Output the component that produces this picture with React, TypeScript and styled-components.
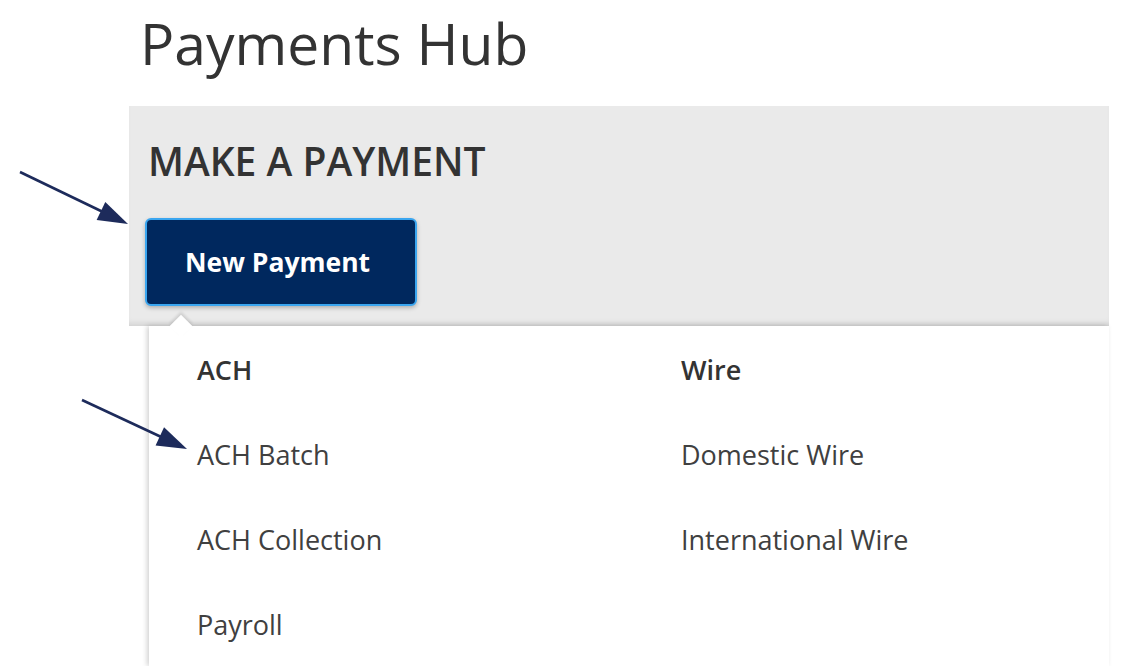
import React from "react";
import styled, { createGlobalStyle } from "styled-components";

const GlobalStyle = createGlobalStyle`
  html, body {
    margin: 0;
    padding: 0;
    background: #ffffff;
    font-family: "Open Sans", "Noto Sans", sans-serif;
    color: #333333;
  }
`;

const Page = styled.div`
  position: relative;
  width: 1134px;
  height: 666px;
  overflow: hidden;
  padding-left: 129px;
  box-sizing: border-box;
`;

const Title = styled.h1`
  margin: 4px 0 0 11px;
  height: 102px;
  font-size: 57px;
  font-weight: 400;
  line-height: 78px;
  color: #333333;
`;

const Panel = styled.section`
  width: 980px;
  height: 220px;
  box-sizing: border-box;
  background: #eaeaea;
  padding: 0 0 0 16px;
  box-shadow: inset 0 -6px 6px -4px rgba(0, 0, 0, 0.12);
`;

const PanelTitle = styled.h2`
  margin: 0 0 0 3px;
  padding-top: 29px;
  font-size: 39px;
  font-weight: 600;
  line-height: 52px;
  color: #333333;
`;

const PrimaryButton = styled.button`
  margin-top: 31px;
  width: 272px;
  height: 88px;
  box-sizing: border-box;
  background: #00285e;
  color: #ffffff;
  border: 2px solid #3aa6f0;
  border-radius: 6px;
  box-shadow: 0 2px 4px rgba(0, 0, 0, 0.25);
  font-family: "Open Sans", sans-serif;
  font-size: 26.5px;
  font-weight: 700;
  padding: 0 0 0 38px;
  text-align: left;
  cursor: pointer;
`;

const Dropdown = styled.div`
  position: relative;
  margin-left: 20px;
  width: 960px;
  height: 340px;
  background: #ffffff;
  box-shadow: -2px 0 5px rgba(0, 0, 0, 0.18);
  padding: 1px 0 0 48px;
  display: grid;
  grid-template-columns: 484px 1fr;
  box-sizing: border-box;

  &::before {
    content: "";
    position: absolute;
    top: -8px;
    left: 24px;
    width: 16px;
    height: 16px;
    background: #ffffff;
    transform: rotate(45deg);
    box-shadow: -2px -2px 3px rgba(0, 0, 0, 0.12);
  }
`;

const Column = styled.ul`
  list-style: none;
  margin: 0;
  padding: 0;
  display: flex;
  flex-direction: column;
`;

const Item = styled.li<{ $heading?: boolean }>`
  height: 85px;
  display: flex;
  align-items: center;
  font-size: 27px;
  font-weight: ${(p) => (p.$heading ? 600 : 400)};
  color: ${(p) => (p.$heading ? "#333333" : "#404040")};
  cursor: ${(p) => (p.$heading ? "default" : "pointer")};
`;

const Annotations = styled.svg`
  position: absolute;
  inset: 0;
  pointer-events: none;
`;

const columns = [
  { heading: "ACH", items: ["ACH Batch", "ACH Collection", "Payroll"] },
  { heading: "Wire", items: ["Domestic Wire", "International Wire"] },
];

function Arrow({ x1, y1, x2, y2 }: { x1: number; y1: number; x2: number; y2: number }) {
  const dx = x2 - x1;
  const dy = y2 - y1;
  const len = Math.hypot(dx, dy);
  const ux = dx / len;
  const uy = dy / len;
  const head = 30;
  const half = 10;
  const bx = x2 - ux * head;
  const by = y2 - uy * head;
  const px = -uy * half;
  const py = ux * half;
  return (
    <g>
      <line x1={x1} y1={y1} x2={bx + ux * 4} y2={by + uy * 4} stroke="#1d2b5b" strokeWidth="2.6" />
      <polygon points={`${x2},${y2} ${bx + px},${by + py} ${bx - px},${by - py}`} fill="#1d2b5b" />
    </g>
  );
}

export default function App() {
  return (
    <>
      <GlobalStyle />
      <Page>
        <Title>Payments Hub</Title>
        <Panel>
          <PanelTitle>MAKE A PAYMENT</PanelTitle>
          <PrimaryButton>New Payment</PrimaryButton>
        </Panel>
        <Dropdown>
          {columns.map((col) => (
            <Column key={col.heading}>
              <Item $heading>{col.heading}</Item>
              {col.items.map((it) => (
                <Item key={it}>{it}</Item>
              ))}
            </Column>
          ))}
        </Dropdown>
        <Annotations width="1134" height="666" viewBox="0 0 1134 666">
          <Arrow x1={20} y1={172} x2={128} y2={224} />
          <Arrow x1={82} y1={400} x2={187} y2={449} />
        </Annotations>
      </Page>
    </>
  );
}
